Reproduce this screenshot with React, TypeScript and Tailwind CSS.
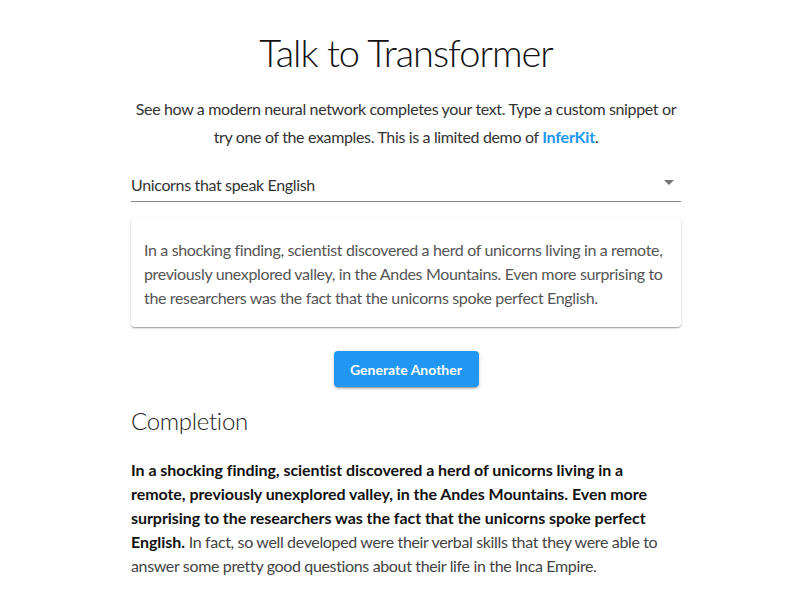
import React from "react";

export default function App() {
  return (
    <div className="min-h-[600px] bg-white text-[#333] font-['Lato',sans-serif]">
      <div className="ml-[131px] w-[550px] pt-[28px]">
        <h1 className="text-center text-[38px] leading-[48px] font-light tracking-[-1px] text-[#111]">Talk to Transformer</h1>
        <p className="mt-[19px] text-center text-[16px] leading-[28px] tracking-[-0.35px] text-[#333]">
          See how a modern neural network completes your text. Type a custom snippet or try one of the examples. This is a limited demo of{" "}
          <span className="font-bold tracking-[-0.2px] text-[#2196f3]">InferKit</span>.
        </p>
        <div className="mt-[17px] flex h-[34px] items-center justify-between border-b border-[#8a8a8a]">
          <span className="text-[16px] tracking-[-0.35px] text-[#333]">Unicorns that speak English</span>
          <svg width="10" height="5" viewBox="0 0 10 5" className="mr-[7px] mb-[4px]">
            <path d="M0 0 L10 0 L5 5 Z" fill="#757575" />
          </svg>
        </div>
        <div className="mt-[16px] rounded-[4px] bg-white px-[13px] pt-[20px] pb-[17px] shadow-[0_1px_3px_rgba(0,0,0,0.2),0_1px_1px_rgba(0,0,0,0.14),0_2px_1px_-1px_rgba(0,0,0,0.12)]">
          <p className="text-[16px] leading-[24px] tracking-[-0.35px] text-[#555]">
            In a shocking finding, scientist discovered a herd of unicorns living in a remote, previously unexplored valley, in the Andes Mountains. Even more surprising to the researchers was the fact that the unicorns spoke perfect English.
          </p>
        </div>
        <div className="mt-[24px] flex justify-center">
          <button className="h-[36px] w-[145px] rounded-[4px] bg-[#2196f3] text-[14px] font-bold text-white shadow-[0_3px_1px_-2px_rgba(0,0,0,0.2),0_2px_2px_0_rgba(0,0,0,0.14),0_1px_5px_0_rgba(0,0,0,0.12)]">
            Generate Another
          </button>
        </div>
        <h2 className="mt-[18px] text-[24px] leading-[32px] font-light tracking-[-0.3px] text-[#222]">Completion</h2>
        <p className="mt-[21px] text-[16px] leading-[24px] tracking-[-0.35px] text-[#444]">
          <span className="font-bold tracking-[-0.05px] text-[#111]">
            In a shocking finding, scientist discovered a herd of unicorns living in a remote, previously unexplored valley, in the Andes Mountains. Even more surprising to the researchers was the fact that the unicorns spoke perfect English.
          </span>{" "}
          In fact, so well developed were their verbal skills that they were able to answer some pretty good questions about their life in the Inca Empire.
        </p>
      </div>
    </div>
  );
}
